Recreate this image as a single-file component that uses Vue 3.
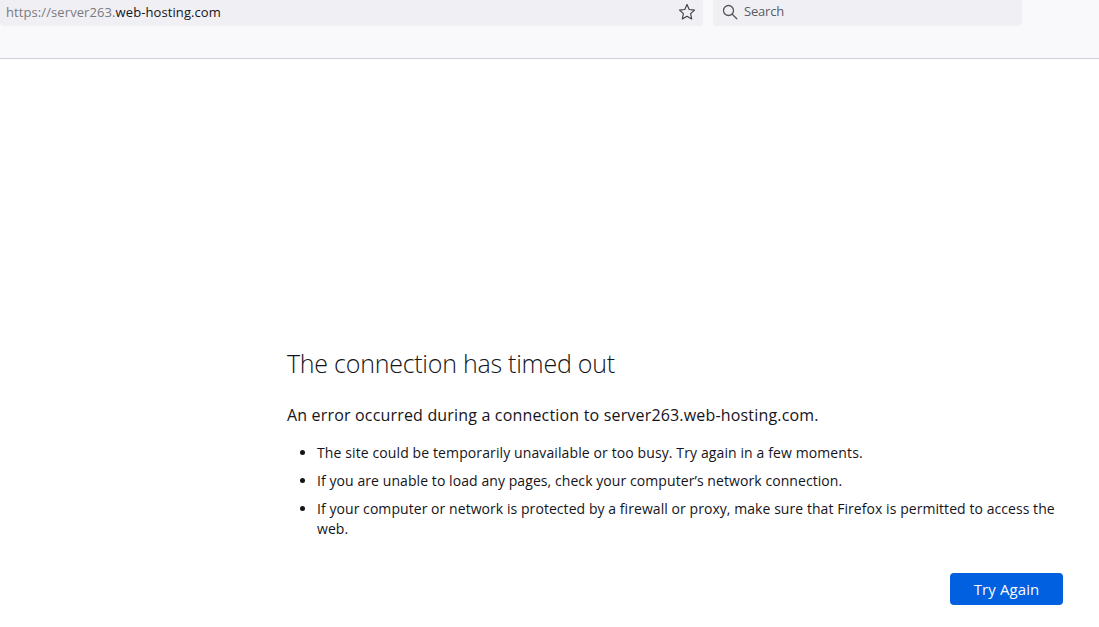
<template>
  <div class="page">
    <header class="toolbar">
      <div class="urlbar">
        <span class="url"><span class="dim">https://server263.</span>web-hosting.com</span>
        <svg class="star" width="18" height="18" viewBox="0 0 18 18" fill="none" stroke="#3c3c44" stroke-width="1.1" stroke-linejoin="round">
          <path d="M9 1.6l2.2 4.9 5.3.6-3.9 3.6 1.1 5.2L9 13.2l-4.7 2.7 1.1-5.2-3.9-3.6 5.3-.6z" />
        </svg>
      </div>
      <div class="search">
        <svg width="16" height="16" viewBox="0 0 16 16" fill="none" stroke="#55555c" stroke-width="1.3" stroke-linecap="round">
          <circle cx="6.5" cy="6.5" r="5" />
          <path d="M10.2 10.2l4.6 4.6" />
        </svg>
        <span class="search-label">Search</span>
      </div>
    </header>
    <main class="content">
      <h1>The connection has timed out</h1>
      <p class="lead">An error occurred during a connection to server263.web-hosting.com.</p>
      <ul>
        <li>The site could be temporarily unavailable or too busy. Try again in a few moments.</li>
        <li>If you are unable to load any pages, check your computer’s network connection.</li>
        <li>If your computer or network is protected by a firewall or proxy, make sure that Firefox is permitted to access the web.</li>
      </ul>
      <div class="actions"><button>Try Again</button></div>
    </main>
  </div>
</template>

<script setup>
</script>

<style>
html, body { margin: 0; background: #fff; overflow: hidden; }
</style>

<style scoped>
.page {
  width: 1099px;
  height: 627px;
  font-family: "Open Sans", "Noto Sans", sans-serif;
  color: #15141a;
  overflow: hidden;
}
.toolbar {
  box-sizing: border-box;
  height: 59px;
  background: #f9f9fb;
  border-bottom: 1px solid #cfcfd8;
  display: flex;
  align-items: flex-start;
  gap: 10px;
}
.urlbar, .search {
  height: 26px;
  background: #f0f0f4;
  border-radius: 0 0 4px 4px;
  display: flex;
  align-items: center;
  font-size: 13px;
  box-sizing: border-box;
  padding-bottom: 2px;
}
.urlbar {
  width: 703px;
  padding-left: 6px;
  padding-right: 7px;
  justify-content: space-between;
}
.url { letter-spacing: 0.09px; color: #15141a; }
.dim { color: #7a7a80; }
.search {
  width: 309px;
  padding-left: 9px;
  gap: 6px;
  color: #5b5b66;
  letter-spacing: -0.2px;
}
.search-label { margin-top: -2px; }
.content {
  box-sizing: border-box;
  padding: 0 36px 0 287px;
}
h1 {
  margin: 288px 0 0;
  font-size: 25px;
  font-weight: 300;
  line-height: 32px;
  letter-spacing: -0.25px;
  color: #15141a;
}
.lead {
  margin: 25px 0 0;
  font-size: 16px;
  line-height: 22px;
  letter-spacing: 0.175px;
}
ul {
  margin: 17px 0 0;
  padding: 0 0 0 30px;
  font-size: 14px;
  line-height: 20px;
  letter-spacing: 0.11px;
}
li { margin-bottom: 8px; }
li:nth-child(2) { letter-spacing: 0.075px; }
li:nth-child(3) { letter-spacing: 0.06px; }
.actions {
  display: flex;
  justify-content: flex-end;
  margin-top: 34px;
}
button {
  width: 113px;
  height: 32px;
  border: 0;
  border-radius: 4px;
  background: #0060df;
  color: #fbfbfe;
  font: 500 15px "Open Sans", sans-serif;
  letter-spacing: 0.1px;
}
</style>
